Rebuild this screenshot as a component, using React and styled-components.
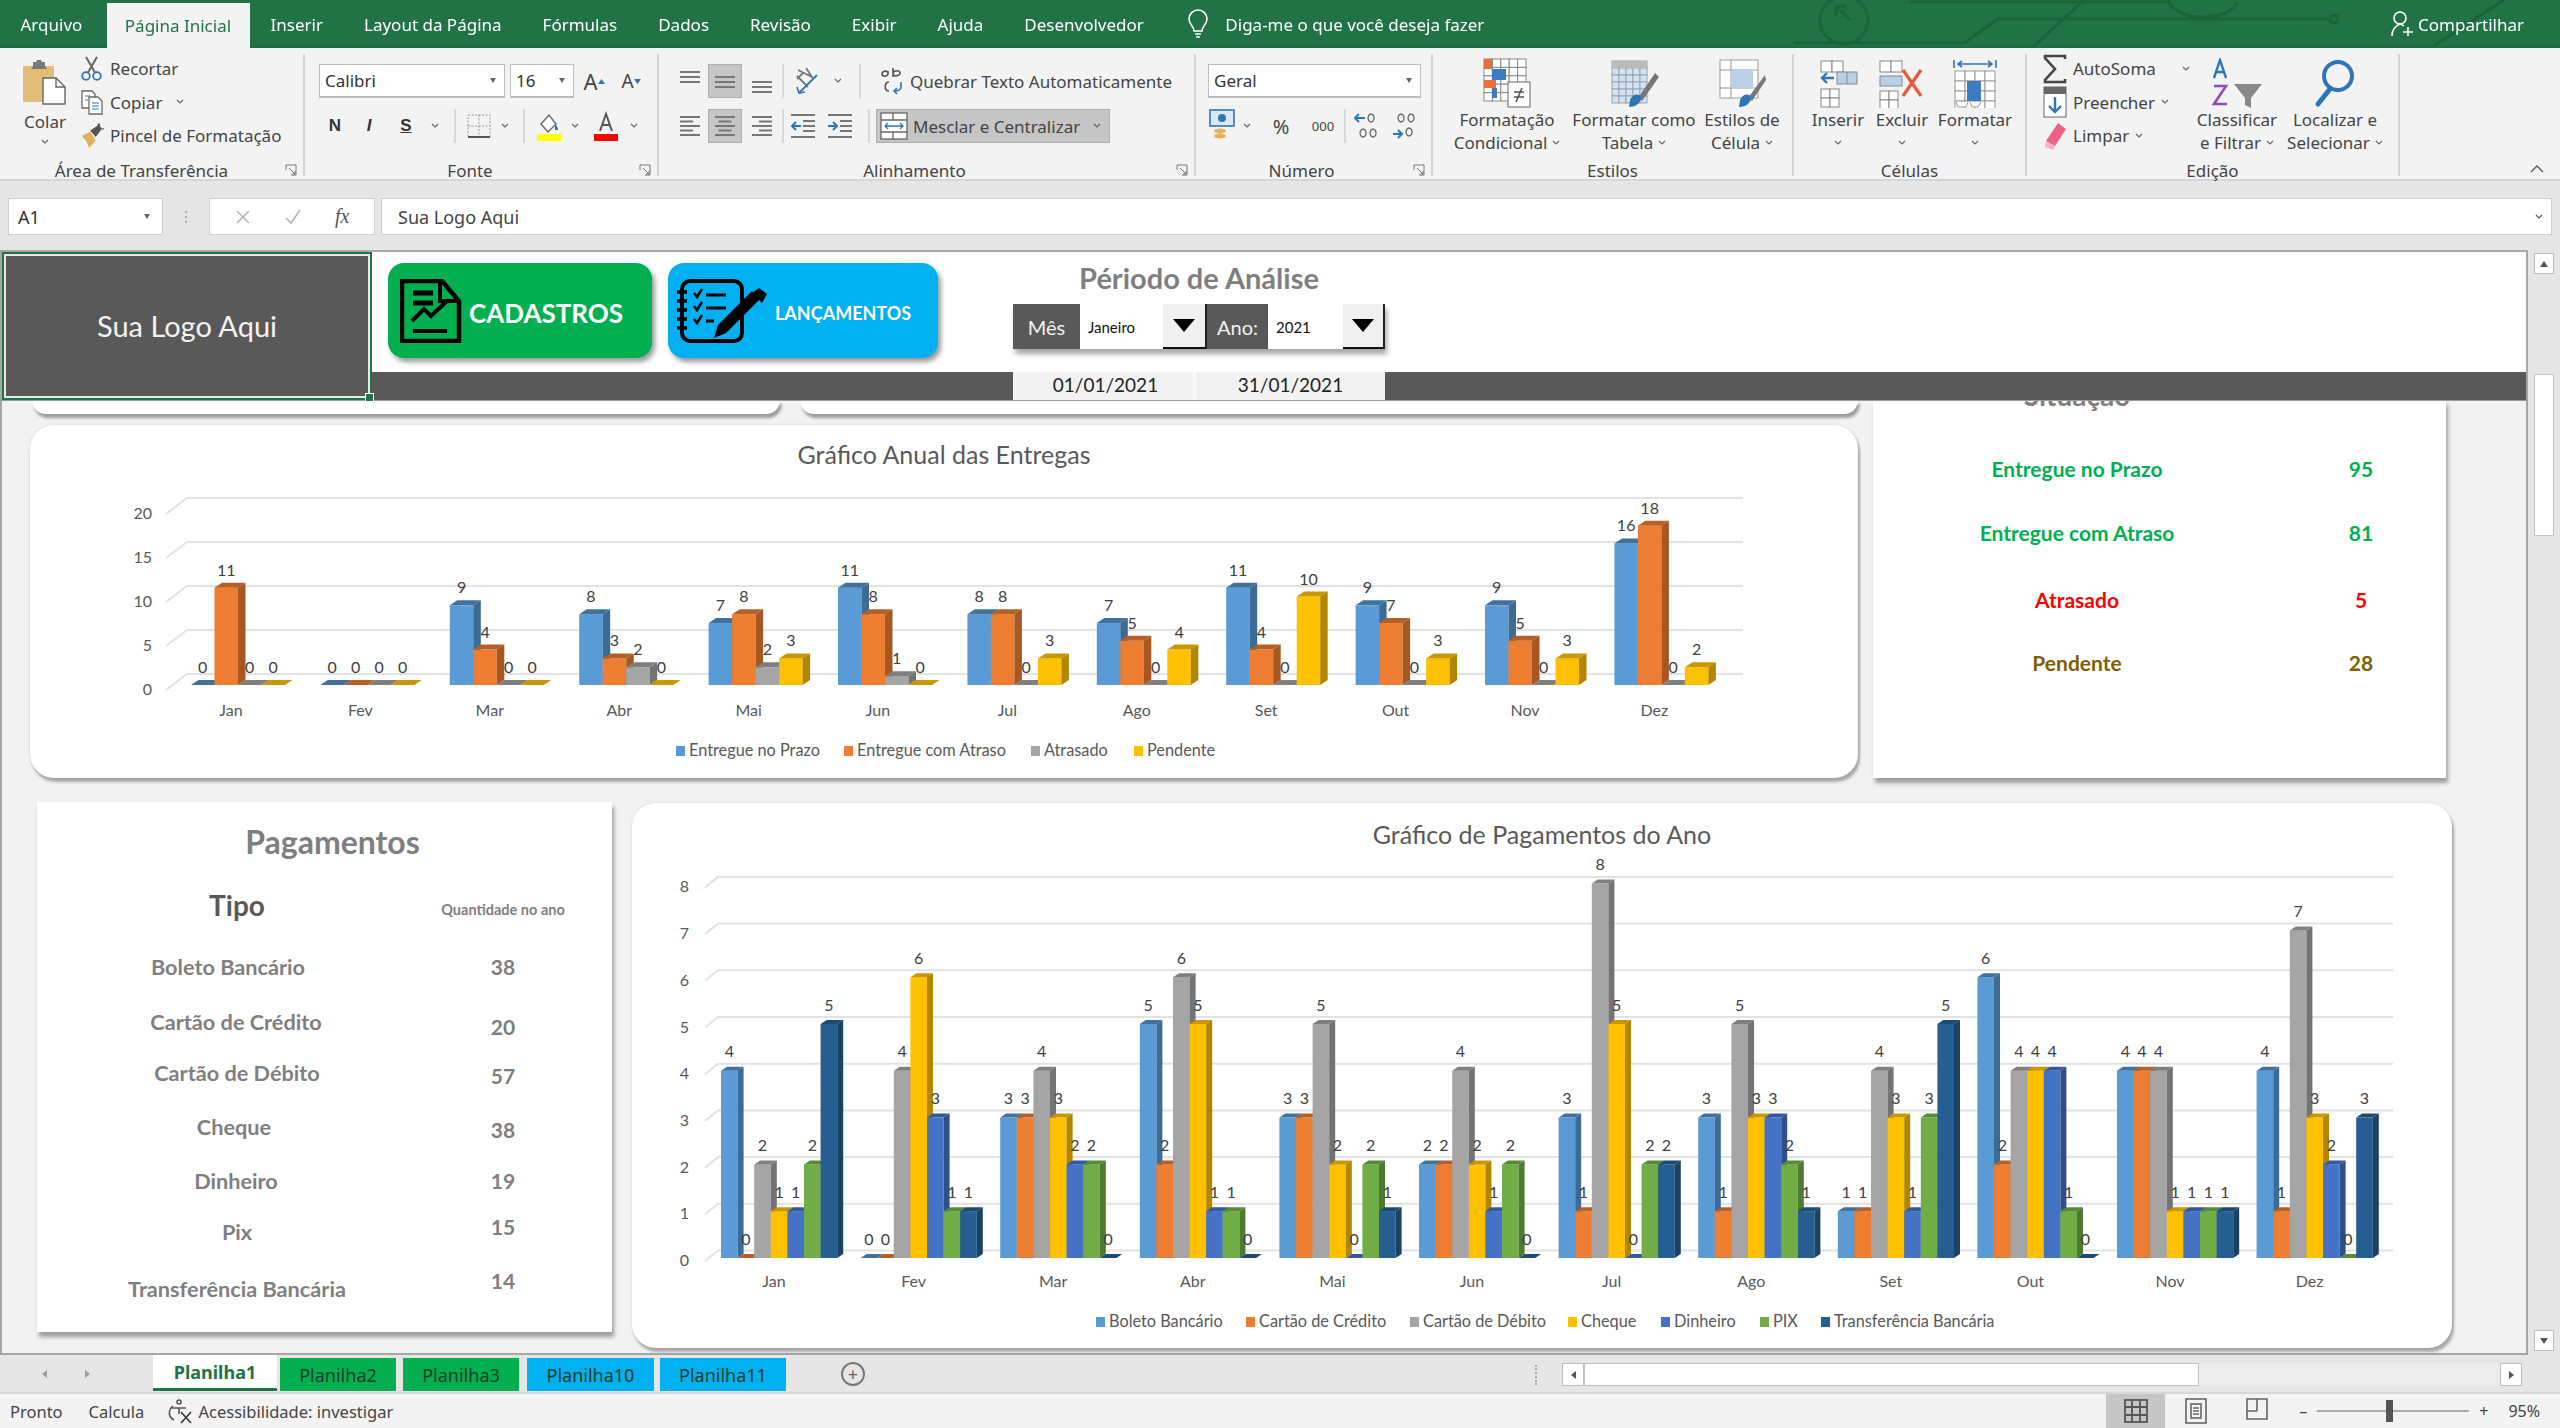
import React from 'react';
import styled, { createGlobalStyle } from 'styled-components';

const GlobalStyle = createGlobalStyle`
  html, body { margin: 0; padding: 0; background: #f3f3f3; overflow: hidden; }
  body { font-family: "Noto Sans", "Open Sans", sans-serif; color: #444; }
  * { box-sizing: border-box; }
`;

const Page = styled.div`
  width: 2560px;
  height: 1428px;
  display: flex;
  flex-direction: column;
  overflow: hidden;
  filter: blur(0.5px);
`;

/* title bar */
const TitleBar = styled.div`
  position: relative;
  height: 48px;
  flex: none;
  background: #217346;
  border-bottom: 2px solid #1c6a3f;
  display: flex;
  align-items: flex-end;
  color: #fff;
  font-size: 17px;
`;
const MenuTab = styled.div`
  height: 44px;
  padding: 0 20.5px;
  margin-right: ${p => p.$mr || 0}px;
  display: flex;
  align-items: center;
  white-space: nowrap;
  position: relative;
  z-index: 1;
  ${p => p.$active && `background: #f3f3f3; color: #217346; height: 45px; margin-bottom: -2px; padding-left: 18px; padding-right: 19px;`}
`;
const TellMe = styled.div`
  display: flex;
  align-items: center;
  gap: 17px;
  height: 44px;
  margin-left: 24px;
  z-index: 1;
`;
const Share = styled.div`
  margin-left: auto;
  display: flex;
  align-items: center;
  gap: 4px;
  height: 44px;
  padding: 0 36px 0 0;
  z-index: 1;
`;
const Circuit = styled.svg`
  position: absolute;
  right: 0;
  top: 0;
`;

/* ribbon */
const Ribbon = styled.div`
  height: 133px;
  flex: none;
  background: #f3f3f3;
  border-bottom: 2px solid #d6d6d6;
  display: flex;
  font-size: 17px;
  color: #444;
  position: relative;
`;
const Group = styled.div`
  width: ${p => p.$w}px;
  height: 122px;
  margin-top: 6px;
  border-right: 2px solid #d4d4d4;
  display: flex;
  flex-direction: column;
  position: relative;
  flex: none;
`;
const GroupBody = styled.div`
  height: 105px;
  flex: none;
  display: flex;
  padding: 0 0 0 ${p => p.$pad || 0}px;
`;
const RowStack = styled.div`
  display: flex;
  flex-direction: column;
  gap: 11px;
  padding-top: 10px;
`;
const GroupLabel = styled.div`
  height: 24px;
  flex: none;
  text-align: center;
  line-height: 24px;
  font-size: 17px;
  color: #444;
  padding-right: ${p => p.$inset || 0}px;
`;
const Launcher = styled.svg`
  position: absolute;
  right: 6px;
  bottom: 0;
`;
const PasteCol = styled.div`
  width: 70px;
  margin-left: 10px;
  display: flex;
  flex-direction: column;
  align-items: center;
  padding-top: 5px;
  font-size: 17px;
  line-height: 20px;
  gap: 7px;
`;
const ActionList = styled.div`
  display: flex;
  flex-direction: column;
  width: ${p => p.$w}px;
  margin-top: -2px;
`;
const Action = styled.div`
  height: 33.5px;
  display: flex;
  align-items: center;
  white-space: nowrap;
  gap: ${p => p.$gap ?? 6}px;
`;
const ActionIcon = styled.div`
  width: ${p => p.$w || 24}px;
  display: flex;
  justify-content: center;
  flex: none;
`;
const ActionCaret = styled.span`
  margin-left: ${p => p.$ml || 0}px;
  display: flex;
`;
const Row = styled.div`
  display: flex;
  align-items: center;
  height: 34px;
`;
const Combo = styled.div`
  width: ${p => p.$w}px;
  height: 34px;
  margin-right: ${p => p.$mr || 0}px;
  background: #fff;
  border: 1px solid #bdbdbd;
  border-bottom-width: 2px;
  display: flex;
  align-items: center;
  justify-content: space-between;
  padding: 0 8px 0 5px;
  font-size: 17px;
  color: #333;
`;
const Caret = styled.span`
  width: 0;
  height: 0;
  border-left: 3.5px solid transparent;
  border-right: 3.5px solid transparent;
  border-top: 5px solid ${p => p.$c || '#666'};
`;
const Tool = styled.div`
  width: ${p => p.$w}px;
  height: 34px;
  display: flex;
  align-items: center;
  justify-content: center;
  flex: none;
  color: #333;
  ${p => p.$on && `background: #c6c6c6; border: 1px solid #adadad;`}
`;
const BoldGlyph = styled.span`
  font-family: "Liberation Sans", sans-serif;
  font-size: 17px;
  font-weight: 700;
  font-style: ${p => (p.$italic ? 'italic' : 'normal')};
  text-decoration: ${p => (p.$under ? 'underline' : 'none')};
`;
const PlainGlyph = styled.span`
  font-size: ${p => p.$s || 15}px;
  color: #444;
`;
const Divider = styled.div`
  width: 2px;
  height: ${p => p.$h || 34}px;
  background: #d8d8d8;
  flex: none;
  margin: 0 ${p => p.$m || 0}px;
`;
const WideAction = styled.div`
  width: ${p => p.$w}px;
  height: 34px;
  display: flex;
  align-items: center;
  gap: 5px;
  padding-left: 3px;
  padding-right: 8px;
  white-space: nowrap;
  flex: none;
  margin-left: ${p => p.$ml || 0}px;
  ${p => p.$on && `background: #c6c6c6; border: 1px solid #adadad;`}
`;
const BigButton = styled.div`
  width: ${p => p.$w}px;
  margin-left: ${p => p.$ml || 0}px;
  flex: none;
  display: flex;
  flex-direction: column;
  align-items: center;
  padding-top: 4px;
  line-height: 23px;
  font-size: 17px;
  white-space: nowrap;
`;
const BigIcon = styled.div`
  height: 50px;
  display: flex;
  align-items: center;
  justify-content: center;
`;
const TextLine = styled.div`
  display: flex;
  align-items: center;
  gap: 5px;
  height: 23px;
`;
const CollapseArrow = styled.svg`
  position: absolute;
  right: 16px;
  bottom: 6px;
`;

/* formula bar */
const FormulaBar = styled.div`
  height: 69px;
  flex: none;
  background: #e6e6e6;
  padding: 17px 8px 15px;
  display: flex;
  align-items: stretch;
`;
const NameBox = styled.div`
  width: 155px;
  background: #fff;
  border: 1px solid #d0d0d0;
  display: flex;
  align-items: center;
  justify-content: space-between;
  padding: 0 12px 0 9px;
  font-size: 18px;
  color: #333;
`;
const Dots = styled.div`
  width: 46px;
  display: flex;
  flex-direction: column;
  align-items: center;
  justify-content: center;
  gap: 3px;
  i { width: 2px; height: 2px; background: #aaa; display: block; }
`;
const FxBox = styled.div`
  width: 166px;
  background: #fff;
  border: 1px solid #d0d0d0;
  display: flex;
  align-items: center;
  justify-content: space-around;
  padding: 0 8px;
  color: #b5b5b5;
`;
const FxGlyph = styled.span`
  font-family: "Liberation Serif", serif;
  font-style: italic;
  font-size: 20px;
  color: #555;
`;
const FormulaInput = styled.div`
  flex: 1;
  margin-left: 6px;
  background: #fff;
  border: 1px solid #d0d0d0;
  display: flex;
  align-items: center;
  justify-content: space-between;
  padding: 0 8px 0 16px;
  font-size: 18px;
  color: #444;
`;

/* sheet */
const SheetArea = styled.div`
  flex: 1;
  min-height: 0;
  display: flex;
  background: #e6e6e6;
`;
const Sheet = styled.div`
  width: 2528px;
  display: flex;
  flex-direction: column;
  border: 2px solid #a6a6a6;
  background: #f2f2f2;
  overflow: hidden;
  font-family: Lato, "Open Sans", sans-serif;
`;
const Frozen = styled.div`
  display: grid;
  grid-template-columns: 370px 1fr;
  grid-template-rows: 120px 28px;
  flex: none;
  position: relative;
  z-index: 2;
  box-shadow: 0 1px 0 #9a9a9a;
`;
const LogoCell = styled.div`
  grid-row: 1 / 3;
  background: #595959;
  border: 2px solid #217346;
  outline: 2px solid #e8e8e8;
  outline-offset: -4px;
  color: #f2f2f2;
  font-size: 29px;
  display: flex;
  align-items: center;
  justify-content: center;
  padding-bottom: 2px;
  position: relative;
  &::after {
    content: '';
    position: absolute;
    right: -4px;
    bottom: -4px;
    width: 7px;
    height: 7px;
    background: #217346;
    border: 1px solid #fff;
  }
`;
const HeaderTop = styled.div`
  background: #fff;
  display: flex;
  padding: 11px 0 0 16px;
  gap: 16px;
`;
const NavButton = styled.div`
  width: ${p => p.$w}px;
  height: 95px;
  border-radius: 16px;
  background: ${p => p.$bg};
  box-shadow: 3px 4px 5px rgba(0, 0, 0, 0.4);
  display: flex;
  align-items: center;
  padding-left: ${p => p.$pad}px;
  gap: ${p => p.$gap}px;
  color: #fff;
  font-weight: 700;
  font-size: ${p => p.$fs}px;
`;
const NavLabel = styled.span`
  padding-top: 5px;
`;
const Period = styled.div`
  margin-left: 59px;
  width: 372px;
  display: flex;
  flex-direction: column;
  align-items: center;
`;
const PeriodTitle = styled.div`
  font-size: 29px;
  font-weight: 700;
  color: #7f7f7f;
  line-height: 29px;
  height: 41px;
`;
const Picker = styled.div`
  display: flex;
  height: 45px;
  width: 372px;
  box-shadow: 2px 5px 5px rgba(0, 0, 0, 0.35);
`;
const PickerLabel = styled.div`
  width: ${p => p.$w}px;
  background: #595959;
  color: #f2f2f2;
  font-size: 20px;
  display: flex;
  align-items: center;
  justify-content: center;
`;
const PickerValue = styled.div`
  width: ${p => p.$w}px;
  background: #fff;
  color: #111;
  font-size: 15px;
  display: flex;
  align-items: center;
  padding-left: 8px;
`;
const PickerArrow = styled.div`
  width: ${p => p.$w}px;
  background: #f0f0f0;
  border-bottom: 2px solid #111;
  border-right: 2px solid #222;
  display: flex;
  align-items: center;
  justify-content: center;
  &::after {
    content: '';
    border-left: 11px solid transparent;
    border-right: 11px solid transparent;
    border-top: 13px solid #000;
  }
`;
const HeaderBottom = styled.div`
  background: #595959;
  padding-left: 641px;
  display: flex;
`;
const DateCell = styled.div`
  width: ${p => p.$w}px;
  background: #f2f2f2;
  color: #222;
  font-size: 19px;
  display: flex;
  align-items: center;
  justify-content: center;
  padding: 0 0 4px ${p => (p.$split ? 0 : 5)}px;
  ${p => p.$split && `border-left: 3px solid #fafafa;`}
`;

const Dashboard = styled.div`
  flex: 1;
  min-height: 0;
  display: flex;
  flex-direction: column;
`;
const TopRow = styled.div`
  display: flex;
  gap: 15px;
  padding-left: 28px;
  flex: none;
`;
const LeftStack = styled.div`
  width: 1828px;
  display: flex;
  flex-direction: column;
  gap: 11px;
`;
const PeekRow = styled.div`
  display: flex;
  gap: 20px;
  padding-left: 2px;
`;
const PeekCard = styled.div`
  width: ${p => p.$w}px;
  height: 14px;
  background: #fff;
  border-radius: 0 0 20px 20px;
  box-shadow: 2px 4px 3px rgba(0, 0, 0, 0.35);
`;
const ChartCard = styled.div`
  width: ${p => p.$w}px;
  height: ${p => p.$h}px;
  margin-top: ${p => p.$mt || 0}px;
  background: #fff;
  border-radius: 24px;
  box-shadow: 2px 4px 3px rgba(0, 0, 0, 0.3), 0 0 3px rgba(0, 0, 0, 0.12);
  overflow: hidden;
  flex: none;
`;
const ChartTitle = styled.div`
  height: ${p => p.$h}px;
  display: flex;
  align-items: center;
  justify-content: center;
  padding-top: 2px;
  font-size: 25px;
  color: #595959;
`;
const ChartSvg = styled.svg`
  display: block;
  overflow: visible;
`;
const StatusCard = styled.div`
  width: 573px;
  height: 378px;
  background: #fff;
  box-shadow: 2px 5px 4px rgba(0, 0, 0, 0.35);
  overflow: hidden;
  flex: none;
`;
const StatusHead = styled.div`
  display: grid;
  grid-template-columns: 408px 160px;
  margin-top: -22px;
  height: 58px;
  align-items: start;
  color: #7f7f7f;
  font-weight: 700;
  text-align: center;
`;
const StatusTitle = styled.div`
  font-size: 28px;
  line-height: 34px;
`;
const StatusQty = styled.div`
  font-size: 12px;
  line-height: 30px;
`;
const StatusRow = styled.div`
  display: grid;
  grid-template-columns: 408px 160px;
  height: ${p => p.$h}px;
  align-items: center;
  text-align: center;
  font-weight: 700;
  font-size: 21px;
  color: ${p => p.$c};
`;
const BottomRow = styled.div`
  display: flex;
  gap: 20px;
  padding: 24px 0 0 35px;
  align-items: flex-start;
`;
const PayCard = styled.div`
  width: 575px;
  height: 530px;
  background: #fff;
  box-shadow: 2px 5px 4px rgba(0, 0, 0, 0.35);
  padding-top: 20px;
  flex: none;
  font-weight: 700;
  color: #7f7f7f;
`;
const PayTitle = styled.div`
  font-size: 32px;
  line-height: 40px;
  height: 63px;
  text-align: center;
  padding-left: 16px;
`;
const PayGrid = styled.div`
  display: grid;
  grid-template-columns: 400px 132px;
  text-align: center;
`;
const PayHeadMain = styled.div`
  font-size: 28px;
  line-height: 40px;
  color: #595959;
  height: 68px;
`;
const PayHeadQty = styled.div`
  font-size: 14.5px;
  line-height: 50px;
  height: 68px;
  white-space: nowrap;
`;
const PayCell = styled.div`
  height: ${p => p.$h}px;
  line-height: 28px;
  font-size: ${p => p.$fs || 21.7}px;
  white-space: nowrap;
  padding-right: ${p => p.$inset || 0}px;
`;

const VScroll = styled.div`
  flex: 1;
  display: flex;
  flex-direction: column;
  align-items: center;
  padding: 3px 0 4px;
`;
const ScrollBtn = styled.div`
  width: ${p => p.$w || 20}px;
  height: ${p => p.$h || 21}px;
  background: #fff;
  border: 1px solid #bcbcbc;
  display: flex;
  align-items: center;
  justify-content: center;
  flex: none;
`;
const Tri = styled.span`
  width: 0;
  height: 0;
  ${p => p.$dir === 'up' && `border-left:4px solid transparent;border-right:4px solid transparent;border-bottom:6px solid #555;`}
  ${p => p.$dir === 'down' && `border-left:4px solid transparent;border-right:4px solid transparent;border-top:6px solid #555;`}
  ${p => p.$dir === 'left' && `border-top:4px solid transparent;border-bottom:4px solid transparent;border-right:5px solid #555;`}
  ${p => p.$dir === 'right' && `border-top:4px solid transparent;border-bottom:4px solid transparent;border-left:5px solid #555;`}
`;
const VThumb = styled.div`
  width: 20px;
  height: 162px;
  margin-top: 100px;
  background: #fff;
  border: 1px solid #c4c4c4;
  flex: none;
`;
const Spacer = styled.div`
  flex: 1;
`;

/* sheet tabs */
const TabBar = styled.div`
  height: 39px;
  flex: none;
  background: #e6e6e6;
  border-bottom: 2px solid #d8d8d8;
  display: flex;
  align-items: flex-start;
`;
const TabNav = styled.div`
  width: 153px;
  height: 37px;
  display: flex;
  align-items: center;
  padding-left: 42px;
  gap: 38px;
  opacity: 0.5;
`;
const SheetTab = styled.div`
  width: ${p => p.$w}px;
  height: 33px;
  margin: 3px 0 0 ${p => p.$ml || 0}px;
  background: ${p => p.$bg};
  color: #0c3d22;
  display: flex;
  align-items: center;
  justify-content: center;
  flex: none;
  font-size: 18px;
  ${p => p.$active && `background: #fff; color: #217346; font-weight: 700; height: 36px; margin-top: 0; border-bottom: 3px solid #217346;`}
`;
const AddSheet = styled.div`
  width: 24px;
  height: 24px;
  margin: 7px 0 0 55px;
  border: 2px solid #777;
  border-radius: 50%;
  color: #666;
  display: flex;
  align-items: center;
  justify-content: center;
  font-size: 18px;
  line-height: 1;
  flex: none;
`;
const HScrollDots = styled.div`
  margin: 10px 0 0 auto;
  height: 20px;
  width: 3px;
  border-left: 2px dotted #aaa;
  flex: none;
`;
const HScroll = styled.div`
  margin: 8px 38px 0 24px;
  width: 960px;
  height: 23px;
  display: flex;
  background: #ececec;
`;
const HThumb = styled.div`
  width: 615px;
  background: #fff;
  border: 1px solid #c0c0c0;
`;

/* status bar */
const StatusBar = styled.div`
  height: 34px;
  flex: none;
  background: #f3f3f3;
  display: flex;
  align-items: center;
  padding-left: 10px;
  font-size: 16.5px;
  color: #444;
`;
const StatusText = styled.span`
  margin-right: ${p => p.$mr || 0}px;
`;
const ViewGroup = styled.div`
  margin-left: auto;
  display: flex;
  align-items: center;
  height: 100%;
`;
const ViewBtn = styled.div`
  width: ${p => p.$w}px;
  height: 100%;
  display: flex;
  align-items: center;
  justify-content: center;
  background: ${p => (p.$on ? '#c6c6c6' : 'transparent')};
`;
const Zoomer = styled.div`
  display: flex;
  align-items: center;
  padding: 0 20px 0 12px;
  gap: 6px;
  font-size: 16px;
`;
const ZoomTrack = styled.div`
  width: 152px;
  height: 2px;
  background: #aaa;
  display: flex;
  align-items: center;
  margin: 0 4px;
  padding-left: 69px;
  i { display: block; width: 7px; height: 22px; background: #555; flex: none; }
`;
const ZoomPct = styled.span`
  margin-left: 14px;
`;

/* ---- small drawings for ribbon ---- */
const Chevron = ({ c = '#666' }) => (
  <svg width="8" height="6" viewBox="0 0 8 6"><path d="M1 1l3 3 3-3" stroke={c} fill="none" strokeWidth="1.2" /></svg>
);
const LauncherIcon = () => (
  <Launcher width="12" height="12" viewBox="0 0 12 12" fill="none" stroke="#777"><path d="M1 6V1h10v10H6M4 4l6 6M7 10h3V7" /></Launcher>
);
const PasteIcon = () => (
  <svg width="46" height="46" viewBox="0 0 46 46">
    <rect x="1" y="7" width="31" height="36" rx="1" fill="#e3bd77" />
    <path d="M11 7V3h3l1-2h4l1 2h3v4l2 3H9z" fill="#7a7a7a" />
    <path d="M21 19h13l9 9v17H21z" fill="#fff" stroke="#666" strokeWidth="1.4" />
    <path d="M34 19v9h9" fill="none" stroke="#666" strokeWidth="1.4" />
  </svg>
);
const ScissorsIcon = () => (
  <svg width="24" height="26" viewBox="0 0 24 26" fill="none">
    <circle cx="6" cy="20" r="3.8" stroke="#2e75b6" strokeWidth="1.8" />
    <circle cx="17" cy="20" r="3.8" stroke="#2e75b6" strokeWidth="1.8" />
    <path d="M8 16.5L17 1M15 16.5L6 1" stroke="#666" strokeWidth="2" />
  </svg>
);
const CopyIcon = () => (
  <svg width="24" height="26" viewBox="0 0 24 26" fill="#fff" stroke="#6a6a6a" strokeWidth="1.3">
    <path d="M2 2h10l3 3v14H2z" />
    <path d="M9 8h9l4 4v13H9z" />
    <path d="M5 7h5M5 11h3M12 14h7M12 17h7M12 20h7" stroke="#2e75b6" strokeWidth="1.1" />
  </svg>
);
const BrushIcon = () => (
  <svg width="26" height="28" viewBox="0 0 26 28">
    <path d="M2 14l9-5 6 10-7 8-3-7z" fill="#e4b15e" />
    <path d="M11 8l9-6 4 4-7 9z" fill="#555" />
    <path d="M19 1l2-1 1 3-2 1zM24 6l2-1-1 3z" fill="#555" />
  </svg>
);
const LinesV = ({ at }) => (
  <svg width="24" height="24" viewBox="0 0 24 24" stroke="#777" strokeWidth="2">
    {[0, 5, 10].map(d => {
      const y = (at === 'top' ? 3 : at === 'mid' ? 8 : 13) + d;
      return <path key={d} d={`M2 ${y}h20`} />;
    })}
  </svg>
);
const LinesH = ({ at }) => {
  const rows = [20, 13, 20, 13, 20];
  return (
    <svg width="24" height="24" viewBox="0 0 24 24" stroke="#777" strokeWidth="2">
      {rows.map((w, i) => {
        const x = at === 'left' ? 2 : at === 'center' ? 12 - w / 2 : 22 - w;
        return <path key={i} d={`M${x} ${3 + i * 4.5}h${w}`} />;
      })}
    </svg>
  );
};
const OrientIcon = () => (
  <svg width="28" height="28" viewBox="0 0 28 28" fill="none">
    <path d="M5 3l14 7-6-9M4 9l11 11M10 6l-6 6" stroke="#777" strokeWidth="1.8" />
    <path d="M24 8L6 26" stroke="#2e75b6" strokeWidth="1.8" />
    <path d="M4 20l2 6 6-1" stroke="#2e75b6" strokeWidth="1.6" />
  </svg>
);
const IndentIcon = ({ dir }) => (
  <svg width="28" height="26" viewBox="0 0 28 26" stroke="#777" strokeWidth="2">
    <path d="M2 2h24M14 8h12M14 13h12M14 18h12M2 24h24" />
    <path d={dir === 'out' ? 'M12 13H3M7 9l-4 4 4 4' : 'M2 13h9M7 9l4 4-4 4'} stroke="#2e75b6" fill="none" />
  </svg>
);
const BorderIcon = () => (
  <svg width="26" height="26" viewBox="0 0 26 26" fill="none" stroke="#999" strokeDasharray="2 1.5">
    <rect x="2" y="2" width="22" height="22" />
    <path d="M13 2v22M2 13h22" />
    <path d="M2 24h22" stroke="#555" strokeWidth="2" strokeDasharray="none" />
  </svg>
);
const FillIcon = () => (
  <svg width="26" height="30" viewBox="0 0 26 30">
    <path d="M5 13l8-9 7 9-8 8z" fill="#fff" stroke="#666" strokeWidth="1.4" />
    <path d="M19 13c2 2 3 4 3 6h-3z" fill="#2e75b6" />
    <rect x="1" y="23" width="24" height="7" fill="#ffff00" />
  </svg>
);
const FontColorIcon = () => (
  <svg width="26" height="30" viewBox="0 0 26 30">
    <path d="M7 20L13 3l6 17M9 14h8" fill="none" stroke="#555" strokeWidth="2" />
    <rect x="1" y="23" width="24" height="7" fill="#ff0000" />
  </svg>
);
const WrapIcon = () => (
  <svg width="24" height="28" viewBox="0 0 24 28" fill="none" stroke="#555" strokeWidth="1.6">
    <path d="M7 6c-1-3-6-2-6 1s5 3 6 0V4M12 1v9M12 6c1-3 7-3 7 0s-6 4-7 1" />
    <path d="M8 15c-5 0-5 9 0 9" />
    <path d="M20 15v5c0 3-3 4-7 4M16 21l-3 3 3 3" stroke="#2e75b6" />
  </svg>
);
const MergeIcon = () => (
  <svg width="28" height="28" viewBox="0 0 28 28" fill="#fff" stroke="#666" strokeWidth="1.3">
    <rect x="1" y="1" width="26" height="26" />
    <path d="M13 1v7M1 8h26M1 20h26M13 20v7" />
    <path d="M5 14h18M8 11l-3 3 3 3M20 11l3 3-3 3" stroke="#2e75b6" fill="none" />
  </svg>
);
const CurrencyIcon = () => (
  <svg width="28" height="34" viewBox="0 0 28 34">
    <rect x="1" y="1" width="24" height="16" fill="#dbe9f6" stroke="#2e75b6" strokeWidth="1.6" />
    <circle cx="13" cy="9" r="4" fill="#2e75b6" />
    <ellipse cx="11" cy="22" rx="6" ry="2.5" fill="#e4b15e" />
    <ellipse cx="11" cy="27" rx="6" ry="2.5" fill="#e4b15e" />
  </svg>
);
const DecimalIcon = ({ more }) => (
  <svg width="30" height="30" viewBox="0 0 30 30" fill="none">
    <path d={more ? 'M12 7H3M6 3L2 7l4 4' : 'M4 23h9M9 19l4 4-4 4'} stroke="#2e75b6" strokeWidth="2" />
    <path d={more ? 'M18 3a3 4 0 1 0 .1 0zM10 18a3 4 0 1 0 .1 0zM20 18a3 4 0 1 0 .1 0z' : 'M12 3a3 4 0 1 0 .1 0zM22 3a3 4 0 1 0 .1 0zM20 17a3 4 0 1 0 .1 0z'} stroke="#666" strokeWidth="1.3" />
  </svg>
);
const CellGrid = ({ x, y, cols, rows, s = 9, c = '#888', fill = '#fff' }) => {
  const out = [];
  for (let r = 0; r < rows; r++) {
    for (let k = 0; k < cols; k++) {
      out.push(<rect key={`${r}-${k}`} x={x + k * s} y={y + r * s} width={s} height={s} fill={fill} stroke={c} strokeWidth="1" />);
    }
  }
  return <g>{out}</g>;
};
const CondIcon = () => (
  <svg width="50" height="50" viewBox="0 0 50 50">
    <CellGrid x={2} y={1} cols={5} rows={5} s={8.4} />
    <rect x="2" y="1" width="8" height="10" fill="#e8703a" />
    <rect x="10" y="11" width="14" height="11" fill="#3e7cc0" />
    <rect x="2" y="22" width="12" height="8" fill="#e8703a" />
    <rect x="10" y="30" width="5" height="10" fill="#3e7cc0" />
    <rect x="26" y="24" width="22" height="25" fill="#fff" stroke="#666" />
    <path d="M32 34h10M32 39h10M40 30l-6 14" stroke="#555" strokeWidth="1.6" />
  </svg>
);
const TableIcon = () => (
  <svg width="50" height="50" viewBox="0 0 50 50">
    <CellGrid x={3} y={3} cols={5} rows={6} s={7} fill="#d4e3f3" c="#9aa5b0" />
    <rect x="3" y="3" width="35" height="7" fill="#bbb" />
    <path d="M46 15L29 40l4 3 17-24z" fill="#777" />
    <path d="M21 42c3-6 8-7 11-3 0 6-5 10-12 10z" fill="#2e75b6" />
  </svg>
);
const StyleIcon = () => (
  <svg width="50" height="50" viewBox="0 0 50 50">
    <rect x="3" y="2" width="38" height="38" fill="#fff" stroke="#999" />
    <path d="M3 12h38M14 2v38M3 30h38" stroke="#999" />
    <rect x="14" y="12" width="22" height="18" fill="#b9d0ea" />
    <path d="M48 17L31 40l4 3 14-21z" fill="#777" />
    <path d="M23 42c3-6 8-7 11-3 0 6-5 10-12 10z" fill="#2e75b6" />
  </svg>
);
const InsertIcon = () => (
  <svg width="40" height="50" viewBox="0 0 40 50">
    <CellGrid x={3} y={3} cols={2} rows={1} s={11} />
    <path d="M16 20H4M9 15l-5 5 5 5" stroke="#2e75b6" strokeWidth="2.4" fill="none" />
    <rect x="19" y="14" width="20" height="12" fill="#b9d0ea" stroke="#888" />
    <path d="M29 14v12" stroke="#888" />
    <CellGrid x={3} y={31} cols={2} rows={2} s={9} />
  </svg>
);
const DeleteIcon = () => (
  <svg width="48" height="50" viewBox="0 0 48 50">
    <CellGrid x={2} y={3} cols={2} rows={1} s={11} />
    <rect x="2" y="18" width="22" height="10" fill="#b9d0ea" stroke="#888" />
    <CellGrid x={2} y={33} cols={2} rows={2} s={9} />
    <path d="M25 12l18 26M43 12L25 38" stroke="#e8593a" strokeWidth="3.2" />
  </svg>
);
const FormatIcon = () => (
  <svg width="46" height="50" viewBox="0 0 46 50">
    <path d="M2 2v8M44 2v8M6 6h34M10 3L6 6l4 3M36 3l4 3-4 3" stroke="#2e75b6" strokeWidth="1.6" fill="none" />
    <CellGrid x={3} y={13} cols={4} rows={4} s={10} c="#999" />
    <rect x="15" y="23" width="14" height="20" fill="#3e7cc0" />
    <path d="M4 44l2 5h8l2-5M18 44l2 5h6l3-5" fill="#fff" stroke="#999" />
  </svg>
);
const SigmaIcon = () => (
  <svg width="24" height="30" viewBox="0 0 24 30">
    <path d="M22 5V2H2v2l10 11L2 26v2h20v-3" fill="none" stroke="#444" strokeWidth="2.6" />
  </svg>
);
const FillDownIcon = () => (
  <svg width="24" height="32" viewBox="0 0 24 32">
    <rect x="1" y="1" width="22" height="30" fill="#fff" stroke="#666" />
    <rect x="1" y="1" width="22" height="7" fill="#666" />
    <path d="M12 11v15M6 20l6 6 6-6" stroke="#2e75b6" strokeWidth="2.4" fill="none" />
  </svg>
);
const EraserIcon = () => (
  <svg width="24" height="30" viewBox="0 0 24 30">
    <path d="M15 2l8 6-11 17-9-5z" fill="#ee5f85" />
    <path d="M3 20l9 5-2 4-8-3z" fill="#f5b0c2" />
  </svg>
);
const SortIcon = () => (
  <svg width="54" height="50" viewBox="0 0 54 50">
    <path d="M24 26h28L41 40v10l-6-3v-7z" fill="#888" />
    <path d="M4 20L10 2l6 18M6 14h8" stroke="#2e75b6" strokeWidth="2.4" fill="none" />
    <path d="M4 28h12L4 46h13" stroke="#8e4db5" strokeWidth="2.6" fill="none" />
  </svg>
);
const FindIcon = () => (
  <svg width="44" height="50" viewBox="0 0 44 50" fill="none">
    <circle cx="25" cy="18" r="14" stroke="#2e75b6" strokeWidth="4" />
    <path d="M17 31L5 46" stroke="#2e75b6" strokeWidth="5" strokeLinecap="round" />
  </svg>
);
const BulbIcon = () => (
  <svg width="20" height="30" viewBox="0 0 20 30" fill="none" stroke="#fff" strokeWidth="1.6">
    <path d="M6 22c0-5-5-6-5-12a9 9 0 0 1 18 0c0 6-5 7-5 12z" />
    <path d="M7 25h6M8 28h4" />
  </svg>
);
const UserPlusIcon = () => (
  <svg width="24" height="28" viewBox="0 0 24 28" fill="none" stroke="#fff" strokeWidth="1.6">
    <circle cx="10" cy="8" r="6" />
    <path d="M2 26c0-7 3-10 8-12 2 .6 3 1.2 4 2" />
    <path d="M18 17v9M13 22h10" />
  </svg>
);

const CadastrosIcon = () => (
  <svg width="62" height="64" viewBox="0 0 62 64" fill="none" stroke="#000">
    <path d="M2 2h40l17 20v40H2z" strokeWidth="4.5" />
    <path d="M40 2v20h19" strokeWidth="4" />
    <path d="M13 14h20M13 24h20" strokeWidth="5" />
    <path d="M12 42l12-12 7 7 16-15" strokeWidth="4" />
    <path d="M13 52h34" strokeWidth="4" />
  </svg>
);
const LancamentosIcon = () => (
  <svg width="92" height="64" viewBox="0 0 92 64" fill="none" stroke="#000">
    <rect x="6" y="2" width="60" height="60" rx="8" strokeWidth="4" />
    <path d="M1 13h10M1 22h10M1 31h10M1 40h10M1 49h10" strokeWidth="3.5" />
    <path d="M18 14l3 4 5-8M18 27l3 4 5-8M18 40l3 4 5-8" strokeWidth="2.5" />
    <path d="M30 16h20M30 29h20M30 42h8" strokeWidth="3" />
    <path d="M84 20L50 54l-12 5 4-13 34-34z" fill="#000" stroke="none" />
    <path d="M86 24l5-9-8-6-7 5z" fill="#000" stroke="none" />
  </svg>
);

/* ---- charts ---- */
const SERIES = {
  blue: ['#5b9bd5', '#3c6c96', '#41719c'],
  orange: ['#ed7d31', '#a65722', '#b65f26'],
  gray: ['#a5a5a5', '#737373', '#7f7f7f'],
  yellow: ['#ffc000', '#b28600', '#c99700'],
  royal: ['#4472c4', '#2f4f89', '#3358a0'],
  green: ['#70ad47', '#4e7931', '#578a36'],
  navy: ['#255e91', '#1a4265', '#1d4a72'],
};
const MONTHS = ['Jan', 'Fev', 'Mar', 'Abr', 'Mai', 'Jun', 'Jul', 'Ago', 'Set', 'Out', 'Nov', 'Dez'];

const Bar3D = ({ x, w, base, top, side, depth, colors }) => {
  const [front, shade, cap] = colors;
  if (top === base) {
    return <polygon points={`${x},${base} ${x + w},${base} ${x + w + side},${base - depth} ${x + side},${base - depth}`} fill={cap} />;
  }
  return (
    <g>
      <rect x={x} y={top} width={w} height={base - top} fill={front} />
      <polygon points={`${x},${top} ${x + w},${top} ${x + w + side},${top - depth} ${x + side},${top - depth}`} fill={cap} />
      <polygon points={`${x + w},${top} ${x + w + side},${top - depth} ${x + w + side},${base - depth} ${x + w},${base}`} fill={shade} />
    </g>
  );
};

const BarChart = ({ box, axis, data, keys, legend }) => {
  const { x0, step, barW, base, unit, side, depth, labelUp, backX, frontX, backY0, frontY0, gridRight, ticks, tickUnit, tickX, catY, catDx, legendY } = axis;
  return (
    <ChartSvg width={box[2]} height={box[3]} viewBox={box.join(' ')} fontFamily='Lato, "Open Sans", sans-serif'>
      {ticks.map(t => {
        const by = backY0 - t * tickUnit;
        const fy = frontY0 - t * tickUnit;
        return (
          <g key={t}>
            <path d={`M${frontX} ${fy}L${backX} ${by}H${gridRight}`} fill="none" stroke="#e2e2e2" strokeWidth="2" />
            <text x={tickX} y={fy + 5} textAnchor="end" fontSize="16" fill="#595959">{t}</text>
          </g>
        );
      })}
      {data.map((group, g) =>
        group.map((v, i) => (
          <Bar3D key={`${g}-${i}`} x={x0 + g * step + i * barW} w={barW} base={base} top={base - v * unit} side={side} depth={depth} colors={SERIES[keys[i]]} />
        )),
      )}
      {data.map((group, g) =>
        group.map((v, i) => (
          <text key={`l${g}-${i}`} x={x0 + g * step + i * barW + barW / 2} y={base - v * unit - labelUp + 5} textAnchor="middle" fontSize="16" fill="#404040">{v}</text>
        )),
      )}
      {MONTHS.map((m, g) => (
        <text key={m} x={x0 + g * step + catDx} y={catY + 5} textAnchor="middle" fontSize="16" fill="#595959">{m}</text>
      ))}
      {legend.map(l => (
        <g key={l.label}>
          <rect x={l.x} y={legendY - 5} width="9" height="10" fill={SERIES[l.key][0]} />
          <text x={l.x + 13} y={legendY + 5} fontSize="16.3" fill="#595959">{l.label}</text>
        </g>
      ))}
    </ChartSvg>
  );
};

const deliveries = [
  [0, 11, 0, 0], [0, 0, 0, 0], [9, 4, 0, 0], [8, 3, 2, 0], [7, 8, 2, 3], [11, 8, 1, 0],
  [8, 8, 0, 3], [7, 5, 0, 4], [11, 4, 0, 10], [9, 7, 0, 3], [9, 5, 0, 3], [16, 18, 0, 2],
];
const payments = [
  [4, 0, 2, 1, 1, 2, 5], [0, 0, 4, 6, 3, 1, 1], [3, 3, 4, 3, 2, 2, 0], [5, 2, 6, 5, 1, 1, 0],
  [3, 3, 5, 2, 0, 2, 1], [2, 2, 4, 2, 1, 2, 0], [3, 1, 8, 5, 0, 2, 2], [3, 1, 5, 3, 3, 2, 1],
  [1, 1, 4, 3, 1, 3, 5], [6, 2, 4, 4, 4, 1, 0], [4, 4, 4, 1, 1, 1, 1], [4, 1, 7, 3, 2, 0, 3],
];

const deliveryAxis = {
  x0: 191, step: 129.4, barW: 23.5, base: 685, unit: 8.85, side: 7.5, depth: 5, labelUp: 17,
  backX: 187, frontX: 166, backY0: 674, frontY0: 690, gridRight: 1743, ticks: [0, 5, 10, 15, 20], tickUnit: 8.8,
  tickX: 152, catY: 711, catDx: 40, legendY: 751,
};
const paymentAxis = {
  x0: 721, step: 139.6, barW: 16.6, base: 1258, unit: 46.8, side: 6, depth: 4, labelUp: 18.5,
  backX: 718, frontX: 705, backY0: 1250.5, frontY0: 1261, gridRight: 2393, ticks: [0, 1, 2, 3, 4, 5, 6, 7, 8], tickUnit: 46.7,
  tickX: 689, catY: 1282, catDx: 53, legendY: 1322,
};

const situacao = [
  { label: 'Entregue no Prazo', value: 95, color: '#00b050', h: 64 },
  { label: 'Entregue com Atraso', value: 81, color: '#00b050', h: 64 },
  { label: 'Atrasado', value: 5, color: '#ff0000', h: 70 },
  { label: 'Pendente', value: 28, color: '#7f6000', h: 56 },
];
const payNames = [
  ['Boleto Bancário', 55, 18], ['Cartão de Crédito', 51, 2], ['Cartão de Débito', 54, 0], ['Cheque', 54, 6],
  ['Dinheiro', 51, 2], ['Pix', 57, 0], ['Transferência Bancária', 28, 0],
];
const payValues = [[38, 60], [20, 49], [57, 54], [38, 51], [19, 45.5], [15, 54.5], [14, 28]];

const menu = ['Inserir', 'Layout da Página', 'Fórmulas', 'Dados', 'Revisão', 'Exibir', 'Ajuda', 'Desenvolvedor'];

const App = () => (
  <Page>
    <GlobalStyle />
    <TitleBar>
      <Circuit width="766" height="46" viewBox="0 0 766 46" fill="none" stroke="#1b6339" strokeWidth="3">
        <circle cx="50" cy="20" r="24" />
        <path d="M42 6l14 14M42 6h10M42 6v10" />
        <path d="M0 43h170l34-24h330M115 2h260c8 20 60 20 68 0M240 46l50-46M640 46l70-46" />
        <circle cx="540" cy="19" r="4" />
      </Circuit>
      <MenuTab $mr={4}>Arquivo</MenuTab>
      <MenuTab $active>Página Inicial</MenuTab>
      {menu.map(m => <MenuTab key={m}>{m}</MenuTab>)}
      <TellMe><BulbIcon />Diga-me o que você deseja fazer</TellMe>
      <Share><UserPlusIcon />Compartilhar</Share>
    </TitleBar>

    <Ribbon>
      <Group $w={305}>
        <GroupBody>
          <PasteCol><PasteIcon /><span>Colar</span><Chevron /></PasteCol>
          <ActionList $w={215}>
            <Action><ActionIcon><ScissorsIcon /></ActionIcon>Recortar</Action>
            <Action><ActionIcon><CopyIcon /></ActionIcon>Copiar<ActionCaret $ml={8}><Chevron /></ActionCaret></Action>
            <Action><ActionIcon><BrushIcon /></ActionIcon>Pincel de Formatação</Action>
          </ActionList>
        </GroupBody>
        <GroupLabel $inset={20}>Área de Transferência</GroupLabel>
        <LauncherIcon />
      </Group>
      <Group $w={354}>
        <GroupBody $pad={14}>
          <RowStack>
            <Row>
              <Combo $w={186} $mr={5}>Calibri<Caret /></Combo>
              <Combo $w={64}>16<Caret /></Combo>
              <Tool $w={40}><PlainGlyph $s={22}>A</PlainGlyph><svg width="7" height="5"><path d="M0 5l3.5-5L7 5z" fill="#2e75b6" /></svg></Tool>
              <Tool $w={34}><PlainGlyph $s={19}>A</PlainGlyph><svg width="7" height="5"><path d="M0 0l3.5 5L7 0z" fill="#2e75b6" /></svg></Tool>
            </Row>
            <Row>
              <Tool $w={32}><BoldGlyph>N</BoldGlyph></Tool>
              <Tool $w={36}><BoldGlyph $italic>I</BoldGlyph></Tool>
              <Tool $w={38}><BoldGlyph $under>S</BoldGlyph></Tool>
              <Tool $w={20}><Chevron /></Tool>
              <Divider $m={9} />
              <Tool $w={28}><BorderIcon /></Tool>
              <Tool $w={24}><Chevron /></Tool>
              <Divider $m={6} />
              <Tool $w={36}><FillIcon /></Tool>
              <Tool $w={16}><Chevron /></Tool>
              <Tool $w={46}><FontColorIcon /></Tool>
              <Tool $w={10}><Chevron /></Tool>
            </Row>
          </RowStack>
        </GroupBody>
        <GroupLabel $inset={22}>Fonte</GroupLabel>
        <LauncherIcon />
      </Group>
      <Group $w={537}>
        <GroupBody $pad={12}>
          <RowStack>
            <Row>
              <Tool $w={37}><LinesV at="top" /></Tool>
              <Tool $w={34} $on><LinesV at="mid" /></Tool>
              <Tool $w={40}><LinesV at="bottom" /></Tool>
              <Divider />
              <Tool $w={46}><OrientIcon /></Tool>
              <Tool $w={16}><Chevron /></Tool>
              <Divider $m={13} />
              <WideAction $w={310} $ml={4}><WrapIcon />Quebrar Texto Automaticamente</WideAction>
            </Row>
            <Row>
              <Tool $w={37}><LinesH at="left" /></Tool>
              <Tool $w={34} $on><LinesH at="center" /></Tool>
              <Tool $w={40}><LinesH at="right" /></Tool>
              <Divider />
              <Tool $w={38}><IndentIcon dir="out" /></Tool>
              <Tool $w={36}><IndentIcon dir="in" /></Tool>
              <Tool $w={10} />
              <Divider />
              <WideAction $w={234} $ml={6} $on><MergeIcon />Mesclar e Centralizar<Spacer /><Chevron /></WideAction>
            </Row>
          </RowStack>
        </GroupBody>
        <GroupLabel $inset={24}>Alinhamento</GroupLabel>
        <LauncherIcon />
      </Group>
      <Group $w={237}>
        <GroupBody $pad={12}>
          <RowStack>
            <Row><Combo $w={213}>Geral<Caret /></Combo></Row>
            <Row>
              <Tool $w={30}><CurrencyIcon /></Tool>
              <Tool $w={18}><Chevron /></Tool>
              <Tool $w={50}><PlainGlyph $s={20}>%</PlainGlyph></Tool>
              <Tool $w={34}><PlainGlyph $s={13}>000</PlainGlyph></Tool>
              <Divider $m={4} />
              <Tool $w={36}><DecimalIcon more /></Tool>
              <Tool $w={36}><DecimalIcon /></Tool>
            </Row>
          </RowStack>
        </GroupBody>
        <GroupLabel $inset={24}>Número</GroupLabel>
        <LauncherIcon />
      </Group>
      <Group $w={361}>
        <GroupBody $pad={12}>
          <BigButton $w={124}><BigIcon><CondIcon /></BigIcon><TextLine>Formatação</TextLine><TextLine>Condicional <Chevron /></TextLine></BigButton>
          <BigButton $w={130}><BigIcon><TableIcon /></BigIcon><TextLine>Formatar como</TextLine><TextLine>Tabela <Chevron /></TextLine></BigButton>
          <BigButton $w={86}><BigIcon><StyleIcon /></BigIcon><TextLine>Estilos de</TextLine><TextLine>Célula <Chevron /></TextLine></BigButton>
        </GroupBody>
        <GroupLabel>Estilos</GroupLabel>
      </Group>
      <Group $w={233}>
        <GroupBody $pad={12}>
          <BigButton $w={64}><BigIcon><InsertIcon /></BigIcon><TextLine>Inserir</TextLine><TextLine><Chevron /></TextLine></BigButton>
          <BigButton $w={64}><BigIcon><DeleteIcon /></BigIcon><TextLine>Excluir</TextLine><TextLine><Chevron /></TextLine></BigButton>
          <BigButton $w={82}><BigIcon><FormatIcon /></BigIcon><TextLine>Formatar</TextLine><TextLine><Chevron /></TextLine></BigButton>
        </GroupBody>
        <GroupLabel>Células</GroupLabel>
      </Group>
      <Group $w={373}>
        <GroupBody $pad={16}>
          <ActionList $w={147}>
            <Action $gap={6}><ActionIcon><SigmaIcon /></ActionIcon>AutoSoma<Spacer /><Chevron /></Action>
            <Action $gap={6}><ActionIcon><FillDownIcon /></ActionIcon>Preencher <Chevron /></Action>
            <Action $gap={6}><ActionIcon><EraserIcon /></ActionIcon>Limpar <Chevron /></Action>
          </ActionList>
          <BigButton $w={94}><BigIcon><SortIcon /></BigIcon><TextLine>Classificar</TextLine><TextLine>e Filtrar <Chevron /></TextLine></BigButton>
          <BigButton $w={102}><BigIcon><FindIcon /></BigIcon><TextLine>Localizar e</TextLine><TextLine>Selecionar <Chevron /></TextLine></BigButton>
        </GroupBody>
        <GroupLabel>Edição</GroupLabel>
      </Group>
      <CollapseArrow width="14" height="9" viewBox="0 0 14 9" fill="none" stroke="#555" strokeWidth="1.3"><path d="M1 8l6-6 6 6" /></CollapseArrow>
    </Ribbon>

    <FormulaBar>
      <NameBox>A1<Caret /></NameBox>
      <Dots><i /><i /><i /></Dots>
      <FxBox>
        <svg width="16" height="16" viewBox="0 0 16 16" stroke="#b5b5b5" strokeWidth="1.6"><path d="M2 2l12 12M14 2L2 14" /></svg>
        <svg width="18" height="16" viewBox="0 0 18 16" stroke="#b5b5b5" strokeWidth="1.6" fill="none"><path d="M2 9l5 5L16 1" /></svg>
        <FxGlyph>fx</FxGlyph>
      </FxBox>
      <FormulaInput>Sua Logo Aqui<Chevron c="#555" /></FormulaInput>
    </FormulaBar>

    <SheetArea>
      <Sheet>
        <Frozen>
          <LogoCell>Sua Logo Aqui</LogoCell>
          <HeaderTop>
            <NavButton $w={264} $bg="#00b050" $pad={12} $gap={7} $fs={26}><CadastrosIcon /><NavLabel>CADASTROS</NavLabel></NavButton>
            <NavButton $w={270} $bg="#00b0f0" $pad={8} $gap={7} $fs={18}><LancamentosIcon /><NavLabel>LANÇAMENTOS</NavLabel></NavButton>
            <Period>
              <PeriodTitle>Périodo de Análise</PeriodTitle>
              <Picker>
                <PickerLabel $w={67}>Mês</PickerLabel>
                <PickerValue $w={83}>Janeiro</PickerValue>
                <PickerArrow $w={44} />
                <PickerLabel $w={61}>Ano:</PickerLabel>
                <PickerValue $w={75}>2021</PickerValue>
                <PickerArrow $w={42} />
              </Picker>
            </Period>
          </HeaderTop>
          <HeaderBottom>
            <DateCell $w={180}>01/01/2021</DateCell>
            <DateCell $w={192} $split>31/01/2021</DateCell>
          </HeaderBottom>
        </Frozen>
        <Dashboard>
          <TopRow>
            <LeftStack>
              <PeekRow>
                <PeekCard $w={748} />
                <PeekCard $w={1058} />
              </PeekRow>
              <ChartCard $w={1828} $h={353}>
                <ChartTitle $h={55}>Gráfico Anual das Entregas</ChartTitle>
                <BarChart
                  box={[30, 480, 1828, 298]}
                  axis={deliveryAxis}
                  data={deliveries}
                  keys={['blue', 'orange', 'gray', 'yellow']}
                  legend={[
                    { key: 'blue', label: 'Entregue no Prazo', x: 676 },
                    { key: 'orange', label: 'Entregue com Atraso', x: 844 },
                    { key: 'gray', label: 'Atrasado', x: 1031 },
                    { key: 'yellow', label: 'Pendente', x: 1134 },
                  ]}
                />
              </ChartCard>
            </LeftStack>
            <StatusCard>
              <StatusHead>
                <StatusTitle>Situação</StatusTitle>
                <StatusQty>Qtd. ano</StatusQty>
              </StatusHead>
              {situacao.map(s => (
                <StatusRow key={s.label} $c={s.color} $h={s.h}>
                  <span>{s.label}</span>
                  <span>{s.value}</span>
                </StatusRow>
              ))}
            </StatusCard>
          </TopRow>
          <BottomRow>
            <PayCard>
              <PayTitle>Pagamentos</PayTitle>
              <PayGrid>
                <PayHeadMain>Tipo</PayHeadMain>
                <PayHeadQty>Quantidade no ano</PayHeadQty>
                <div>
                  {payNames.map(([name, h, inset]) => <PayCell key={name} $h={h} $inset={inset}>{name}</PayCell>)}
                </div>
                <div>
                  {payValues.map(([v, h], i) => <PayCell key={i} $h={h} $fs={21}>{v}</PayCell>)}
                </div>
              </PayGrid>
            </PayCard>
            <ChartCard $w={1820} $h={545} $mt={1}>
              <ChartTitle $h={60}>Gráfico de Pagamentos do Ano</ChartTitle>
              <BarChart
                box={[632, 863, 1820, 485]}
                axis={paymentAxis}
                data={payments}
                keys={['blue', 'orange', 'gray', 'yellow', 'royal', 'green', 'navy']}
                legend={[
                  { key: 'blue', label: 'Boleto Bancário', x: 1096 },
                  { key: 'orange', label: 'Cartão de Crédito', x: 1246 },
                  { key: 'gray', label: 'Cartão de Débito', x: 1410 },
                  { key: 'yellow', label: 'Cheque', x: 1568 },
                  { key: 'royal', label: 'Dinheiro', x: 1661 },
                  { key: 'green', label: 'PIX', x: 1760 },
                  { key: 'navy', label: 'Transferência Bancária', x: 1821 },
                ]}
              />
            </ChartCard>
          </BottomRow>
        </Dashboard>
      </Sheet>
      <VScroll>
        <ScrollBtn><Tri $dir="up" /></ScrollBtn>
        <VThumb />
        <Spacer />
        <ScrollBtn><Tri $dir="down" /></ScrollBtn>
      </VScroll>
    </SheetArea>

    <TabBar>
      <TabNav>
        <Tri $dir="left" />
        <Tri $dir="right" />
      </TabNav>
      <SheetTab $w={124} $active>Planilha1</SheetTab>
      <SheetTab $w={116} $ml={3} $bg="#00b050">Planilha2</SheetTab>
      <SheetTab $w={116} $ml={7} $bg="#00b050">Planilha3</SheetTab>
      <SheetTab $w={127} $ml={8} $bg="#00b0f0">Planilha10</SheetTab>
      <SheetTab $w={126} $ml={6} $bg="#00b0f0">Planilha11</SheetTab>
      <AddSheet>+</AddSheet>
      <HScrollDots />
      <HScroll>
        <ScrollBtn $w={22} $h={23}><Tri $dir="left" /></ScrollBtn>
        <HThumb />
        <Spacer />
        <ScrollBtn $w={22} $h={23}><Tri $dir="right" /></ScrollBtn>
      </HScroll>
    </TabBar>

    <StatusBar>
      <StatusText $mr={26}>Pronto</StatusText>
      <StatusText $mr={22}>Calcula</StatusText>
      <svg width="28" height="26" viewBox="0 0 28 26" fill="none" stroke="#555" strokeWidth="1.6">
        <circle cx="13" cy="4" r="2" />
        <path d="M7 8c-5 4-5 11 1 14M4 10h16M13 10v6" />
        <path d="M15 14l10 11M25 14L15 25" stroke="#333" />
      </svg>
      <StatusText>&nbsp;Acessibilidade: investigar</StatusText>
      <ViewGroup>
        <ViewBtn $w={59} $on>
          <svg width="26" height="26" viewBox="0 0 26 26" fill="none" stroke="#555" strokeWidth="1.8"><rect x="2" y="2" width="22" height="22" /><path d="M9 2v22M17 2v22M2 9h22M2 17h22" /></svg>
        </ViewBtn>
        <ViewBtn $w={62}>
          <svg width="22" height="26" viewBox="0 0 22 26" fill="none" stroke="#666" strokeWidth="1.6"><rect x="1" y="1" width="20" height="24" /><rect x="6" y="6" width="10" height="14" /><path d="M8 10h6M8 13h6M8 16h6" /></svg>
        </ViewBtn>
        <ViewBtn $w={60}>
          <svg width="24" height="26" viewBox="0 0 24 26" fill="none" stroke="#666" strokeWidth="1.6"><path d="M2 1h20v20H2zM12 1v12M2 13h10" /></svg>
        </ViewBtn>
        <Zoomer>
          <span>–</span>
          <ZoomTrack><i /></ZoomTrack>
          <span>+</span>
          <ZoomPct>95%</ZoomPct>
        </Zoomer>
      </ViewGroup>
    </StatusBar>
  </Page>
);

export default App;
